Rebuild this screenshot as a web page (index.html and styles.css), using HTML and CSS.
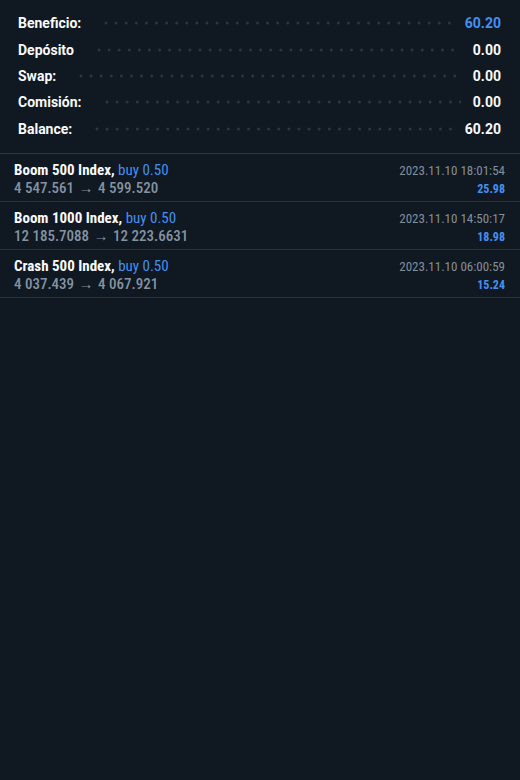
FILE: index.html
```html
<!DOCTYPE html>
<html lang="es">
<head>
<meta charset="utf-8">
<meta name="viewport" content="width=device-width, initial-scale=1">
<title>Historial</title>
<link rel="stylesheet" href="styles.css">
</head>
<body>
<main>
  <dl class="summary">
    <div class="summary-row"><dt>Beneficio:</dt><dd><svg class="leader" aria-hidden="true"><line x1="4" y1="3" x2="100%" y2="3"/></svg><span class="profit">60.20</span></dd></div>
    <div class="summary-row"><dt>Depósito</dt><dd><svg class="leader" aria-hidden="true"><line x1="4" y1="3" x2="100%" y2="3"/></svg><span>0.00</span></dd></div>
    <div class="summary-row"><dt>Swap:</dt><dd><svg class="leader" aria-hidden="true"><line x1="4" y1="3" x2="100%" y2="3"/></svg><span>0.00</span></dd></div>
    <div class="summary-row"><dt>Comisión:</dt><dd><svg class="leader" aria-hidden="true"><line x1="4" y1="3" x2="100%" y2="3"/></svg><span>0.00</span></dd></div>
    <div class="summary-row"><dt>Balance:</dt><dd><svg class="leader" aria-hidden="true"><line x1="4" y1="3" x2="100%" y2="3"/></svg><span>60.20</span></dd></div>
  </dl>
  <ul class="trades">
    <li class="trade">
      <div><div class="title"><strong>Boom 500 Index,</strong> <span class="side">buy 0.50</span></div><div class="prices">4 547.561 <span class="arrow">→</span> 4 599.520</div></div>
      <div class="result"><time datetime="2023-11-10T18:01:54">2023.11.10 18:01:54</time><div class="amount">25.98</div></div>
    </li>
    <li class="trade">
      <div><div class="title"><strong>Boom 1000 Index,</strong> <span class="side">buy 0.50</span></div><div class="prices">12 185.7088 <span class="arrow">→</span> 12 223.6631</div></div>
      <div class="result"><time datetime="2023-11-10T14:50:17">2023.11.10 14:50:17</time><div class="amount">18.98</div></div>
    </li>
    <li class="trade">
      <div><div class="title"><strong>Crash 500 Index,</strong> <span class="side">buy 0.50</span></div><div class="prices">4 037.439 <span class="arrow">→</span> 4 067.921</div></div>
      <div class="result"><time datetime="2023-11-10T06:00:59">2023.11.10 06:00:59</time><div class="amount">15.24</div></div>
    </li>
  </ul>
</main>
</body>
</html>
```
FILE: styles.css
```css
* { box-sizing: border-box; }
body {
  margin: 0;
  min-height: 100vh;
  background: #101821;
  color: #f8fafc;
  font-family: Roboto, "Liberation Sans", sans-serif;
}
.summary {
  display: grid;
  grid-auto-rows: 1fr;
  min-height: 153px;
  margin: 0;
  padding: 10px 19px 11px 18px;
  font-size: 14px;
  font-weight: 700;
}
.summary-row { display: flex; align-items: center; }
.summary dd {
  display: flex;
  flex: 1;
  align-items: center;
  gap: 12px;
  margin: 0 0 0 21px;
}
.leader { flex: 1; min-width: 0; height: 6px; overflow: hidden; }
.leader line {
  stroke: #2e353d;
  stroke-width: 3;
  stroke-linecap: round;
  stroke-dasharray: 0 10.1;
}
.profit, .side, .amount { color: #4590f0; }
.trades {
  margin: 0;
  padding: 0;
  list-style: none;
  border-top: 1px solid #2d353e;
  font-family: "Roboto Condensed", Roboto, "Liberation Sans", sans-serif;
}
.trade {
  display: flex;
  justify-content: space-between;
  padding: 7px 15px 3px 14px;
  border-bottom: 1px solid #29313a;
  line-height: 18px;
  white-space: nowrap;
}
.title, .prices { font-size: 15px; }
.prices { color: #8493a3; font-weight: 500; }
.arrow { margin: 0 1px; }
.result { padding-top: 1px; font-size: 13px; text-align: right; }
.result time { display: block; color: #84909c; }
.amount { font-size: 12px; font-weight: 700; }
```
